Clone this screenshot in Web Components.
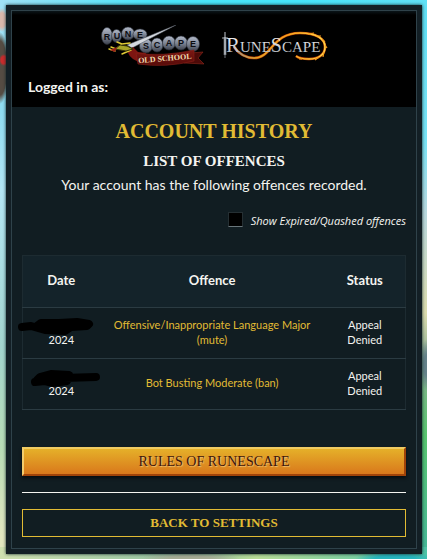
<!DOCTYPE html>
<html lang="en">
<head>
<meta charset="utf-8">
<meta name="viewport" content="width=device-width, initial-scale=1">
<title>Account History</title>
<style>
  html, body { margin: 0; }
  body {
    font-family: Lato, "Liberation Sans", sans-serif;
    color: #f4f4f0;
    --gold: #e1bb34;
    --line: #2b3b42;
    --panel: #111d22;
    --display: "Liberation Serif", serif;
  }
</style>
</head>
<body>
<page-backdrop>
  <stone-panel>
    <site-header slot="header"></site-header>
    <page-heading>
      Account History
      <span slot="sub">List of Offences</span>
      <span slot="intro">Your account has the following offences recorded.</span>
    </page-heading>
    <expired-toggle>Show Expired/Quashed offences</expired-toggle>
    <offence-table></offence-table>
    <gold-button>Rules of RuneScape</gold-button>
    <outline-link href="#settings">Back to Settings</outline-link>
  </stone-panel>
</page-backdrop>

<script>
const html = String.raw;

class PageBackdrop extends HTMLElement {
  constructor() {
    super();
    this.attachShadow({ mode: 'open' });
    this.shadowRoot.innerHTML = html`
      <style>
        :host {
          display: block;
          box-sizing: border-box;
          min-height: 100vh;
          padding: 5px 5px 5px 6px;
          /* red tents on the left, hills on the right, sky to meadow behind */
          background:
            radial-gradient(ellipse 5px 6px at 4px 60px, #c92c2c 60%, transparent) no-repeat,
            radial-gradient(ellipse 6px 12px at 2px 20px, #d9b7ab 60%, transparent) no-repeat,
            radial-gradient(ellipse 9px 36px at 0 68px, #554c43 75%, transparent) no-repeat,
            radial-gradient(ellipse 8px 26px at 100% 365px, #65828a 40%, transparent) no-repeat,
            radial-gradient(ellipse 50px 8px at 190px 100%, #a6ab94 40%, transparent) no-repeat,
            radial-gradient(ellipse 40px 8px at 395px 100%, #27b4bd 50%, transparent) no-repeat,
            linear-gradient(90deg, #a0e1f6, #4be5fa 35%, #46e5fb 70%, #62e0f5) 0 0 / 100% 40px no-repeat,
            linear-gradient(90deg, #cfe0b0, #8fc0a0 45%, #b9dc97 60%, #4fc4a6) 0 100% / 100% 12px no-repeat,
            linear-gradient(#62e0f5, #79e4f6 25%, #b9d8de 38%, #dcdcae 56%, #8fb094 64%, #58c56e 78%, #45b79b) 100% 0 / 50% 100% no-repeat,
            linear-gradient(#8ddff5, #8fdcf1 20%, #b4e6f5 34%, #a3d5cf 62%, #b8dcb6 80%, #e2e6bf 96%);
        }
      </style>
      <slot></slot>
    `;
  }
}

class StonePanel extends HTMLElement {
  constructor() {
    super();
    this.attachShadow({ mode: 'open' });
    this.shadowRoot.innerHTML = html`
      <style>
        :host {
          display: block;
          padding: 6px;
          background: #131f25;
          box-shadow: 0 0 3px #0c2226;
        }
        .frame {
          outline: 1px solid #2f424a;
          background: var(--panel);
        }
        main { padding: 0 10px 11px; }
      </style>
      <div class="frame">
        <slot name="header"></slot>
        <main><slot></slot></main>
      </div>
    `;
  }
}

class SiteHeader extends HTMLElement {
  constructor() {
    super();
    this.attachShadow({ mode: 'open' });
    this.shadowRoot.innerHTML = html`
      <style>
        :host {
          display: block;
          background: linear-gradient(#0a1418, #000 4px);
          padding: 14px 16px 10px;
        }
        nav { display: flex; justify-content: center; gap: 16px; }
        a { display: block; height: 44px; }
        svg { display: block; }
        p { margin: 8px 0 0; font-size: 14px; line-height: 20px; font-weight: 700; }
      </style>
      <nav>
        <a href="#oldschool" aria-label="Old School RuneScape">
          <svg width="104" height="44" viewBox="0 0 104 44">
            <defs>
              <linearGradient id="stone" x1="0" y1="0" x2="0" y2="1">
                <stop offset="0" stop-color="#b3bac9"/>
                <stop offset=".55" stop-color="#78808f"/>
                <stop offset="1" stop-color="#3c414d"/>
              </linearGradient>
              <linearGradient id="ribbon" x1="0" y1="0" x2="0" y2="1">
                <stop offset="0" stop-color="#7d1813"/>
                <stop offset="1" stop-color="#560b09"/>
              </linearGradient>
            </defs>
            <g fill="url(#stone)" stroke="#2c303a" stroke-width=".6">
              <ellipse cx="7" cy="11" rx="5.500" ry="8.500"/>
              <ellipse cx="16.500" cy="11" rx="5" ry="6.500"/>
              <ellipse cx="28" cy="8.500" rx="6.500" ry="6.500"/>
              <ellipse cx="40" cy="9.500" rx="7" ry="5.500"/>
              <ellipse cx="46" cy="21" rx="6.500" ry="7"/>
              <ellipse cx="57" cy="20" rx="6" ry="7"/>
              <ellipse cx="69" cy="18" rx="6.500" ry="7"/>
              <ellipse cx="81" cy="18" rx="6.500" ry="7"/>
              <ellipse cx="93" cy="19" rx="6.500" ry="7.500"/>
            </g>
            <g font-family="Liberation Sans, sans-serif" font-weight="700" font-size="9" fill="#0c0d12" text-anchor="middle">
              <text x="7" y="15">R</text><text x="17" y="14">U</text><text x="28" y="12">N</text><text x="40" y="13">E</text>
              <text x="46" y="24">S</text><text x="57" y="23">C</text><text x="69" y="21">A</text><text x="81" y="21">P</text><text x="93" y="22">E</text>
            </g>
            <path d="M27 20 76 0 32 23z" fill="#d5d9df" stroke="#555b65" stroke-width=".5"/>
            <path d="M27 26Q31 36 43 38L46 28 38 27 33 22z" fill="#7d1511"/>
            <path d="M90 28 103 27 98 33 104 39 84 38z" fill="#4d0a08" stroke="#8f2a1d" stroke-width=".6"/>
            <path d="M36 28Q62 32 94 25L94 36Q65 43 38 39z" fill="url(#ribbon)" stroke="#8c2017" stroke-width=".6"/>
            <path d="M11 22 16 24 22 19 17 17M15 26 9 24M22 19 30 18M19 24 28 22M22 29 31 25" fill="none" stroke="#e0cb35" stroke-width="1.500" stroke-linecap="round"/>
            <path d="M15 24 20 20 27 21 33 24 26 26z" fill="#a7a428" stroke="#343207" stroke-width="1"/>
            <path d="M10 25 17 22 15 27z" fill="#9a2118"/>
            <text x="65" y="36" font-family="Liberation Serif, serif" font-weight="700" font-size="8" fill="#f0deb0" text-anchor="middle" transform="rotate(-5 65 35)">OLD SCHOOL</text>
          </svg>
        </a>
        <a href="#runescape" aria-label="RuneScape">
          <svg width="108" height="44" viewBox="0 0 108 44">
            <defs>
              <linearGradient id="steel" x1="0" y1="0" x2="0" y2="1">
                <stop offset="0" stop-color="#fff"/>
                <stop offset="1" stop-color="#a4a9b0"/>
              </linearGradient>
              <linearGradient id="fire" x1="0" y1="0" x2="1" y2="0">
                <stop offset="0" stop-color="#8f959d"/>
                <stop offset=".25" stop-color="#e0a628"/>
                <stop offset=".6" stop-color="#f7a61d"/>
                <stop offset="1" stop-color="#ffd94a"/>
              </linearGradient>
            </defs>
            <path d="M5 12V30" stroke="#a3a8ae" stroke-width="2.500"/>
            <path d="M5 7V13M2 13H8" stroke="#a3a8ae" stroke-width="1.200"/>
            <path d="M5 29V33" stroke="#70767e" stroke-width="1"/>
            <path d="M14 22Q22 33 34 33C52 33 52 8 80 8C97 8 105 14 105 22C105 30 98 34 89 34Q80 34 76 31" fill="none" stroke="#cc4b07" stroke-width="2.600"/>
            <path d="M14 22Q22 33 34 33C52 33 52 8 80 8C97 8 105 14 105 22C105 30 98 34 89 34Q80 34 76 31" fill="none" stroke="url(#fire)" stroke-width="1.500"/>
            <path d="M88 9 94 8M96 11 101 11M102 14 105 17M105 20 107 23M104 27 103 32M99 32 95 35M82 34 79 34" fill="none" stroke="#f49a1c" stroke-width="1.200"/>
            <text x="6" y="27" font-family="Liberation Serif, serif" font-size="15" fill="url(#steel)"><tspan font-size="21">R</tspan>UNE<tspan font-size="20">S</tspan>CAPE</text>
          </svg>
        </a>
      </nav>
      <p>Logged in as:</p>
    `;
  }
}

class PageHeading extends HTMLElement {
  constructor() {
    super();
    this.attachShadow({ mode: 'open' });
    this.shadowRoot.innerHTML = html`
      <style>
        :host { display: block; padding-top: 12px; text-align: center; }
        h1, h2 { margin: 0; font-family: var(--display); font-weight: 700; text-transform: uppercase; }
        h1 { font-size: 20px; line-height: 24px; color: var(--gold); }
        h2 { margin-top: 8px; font-size: 15px; line-height: 20px; }
        p { margin: 4px 0 0; font-size: 14px; line-height: 20px; }
      </style>
      <h1><slot></slot></h1>
      <h2><slot name="sub"></slot></h2>
      <p><slot name="intro"></slot></p>
    `;
  }
}

class ExpiredToggle extends HTMLElement {
  constructor() {
    super();
    this.attachShadow({ mode: 'open' });
    this.shadowRoot.innerHTML = html`
      <style>
        :host {
          display: flex;
          justify-content: flex-end;
          align-items: center;
          gap: 8px;
          padding-top: 16px;
          font-family: "Open Sans", sans-serif;
          font-size: 11px;
          line-height: 20px;
          font-style: italic;
        }
        input {
          appearance: none;
          box-sizing: border-box;
          width: 15px;
          height: 15px;
          margin: 0 0 4px;
          background: #000;
          border: 1px solid #252f33;
          border-bottom-color: #69757a;
        }
        input:checked { background: var(--gold); }
      </style>
      <input type="checkbox" id="expired">
      <label for="expired"><slot></slot></label>
    `;
  }
}

class InkMark extends HTMLElement {
  constructor() {
    super();
    this.attachShadow({ mode: 'open' });
    const shape = this.getAttribute('shape') === 'b'
      ? 'M6 14 16 13 24 15 38 13 40 7 22 6 11 9 8 12M12 10 34 10M34 10 67 9'
      : 'M5 10 14 9 28 13 48 14 54 10 70 9 72 7 60 5 42 6 24 6 20 9 60 8';
    this.shadowRoot.innerHTML = html`
      <style>
        :host { display: block; position: relative; height: 15px; }
        svg { position: absolute; left: 50%; top: 0; }
        :host([shape="a"]) svg { margin-left: -44px; }
        :host([shape="b"]) svg { margin-left: -32px; }
      </style>
      <svg width="77" height="19" viewBox="0 0 77 19" aria-hidden="true">
        <path d="${shape}" fill="#000" stroke="#000" stroke-width="8" stroke-linecap="round" stroke-linejoin="round"/>
      </svg>
    `;
  }
}

class OffenceTable extends HTMLElement {
  constructor() {
    super();
    this.attachShadow({ mode: 'open' });
    this.shadowRoot.innerHTML = html`
      <style>
        :host { display: block; padding-top: 24px; }
        table {
          width: 100%;
          table-layout: fixed;
          border-collapse: collapse;
          border: 1px solid #1d2b31;
          text-align: center;
          font-size: 11px;
          line-height: 15px;
        }
        .date { width: 20%; }
        .status { width: 21%; }
        th { height: 49px; padding: 0 0 2px; background: #14232a; font-size: 13px; font-weight: 700; }
        td { height: 47px; padding: 0 12px 3px; }
        td:first-child { padding: 0 0 3px; }
        tr { border-bottom: 1px solid var(--line); }
        a { color: var(--gold); text-decoration: none; }
      </style>
      <table>
        <thead>
          <tr><th class="date">Date</th><th>Offence</th><th class="status">Status</th></tr>
        </thead>
        <tbody>
          <tr>
            <td><ink-mark shape="a"></ink-mark>2024</td>
            <td><a href="#mute">Offensive/Inappropriate Language Major (mute)</a></td>
            <td>Appeal Denied</td>
          </tr>
          <tr>
            <td><ink-mark shape="b"></ink-mark>2024</td>
            <td><a href="#ban">Bot Busting Moderate (ban)</a></td>
            <td>Appeal Denied</td>
          </tr>
        </tbody>
      </table>
    `;
  }
}

class GoldButton extends HTMLElement {
  constructor() {
    super();
    this.attachShadow({ mode: 'open' });
    this.shadowRoot.innerHTML = html`
      <style>
        :host { display: block; padding: 37px 0 16px; border-bottom: 1px solid #f4f4f0; }
        button {
          display: block;
          box-sizing: border-box;
          width: 100%;
          height: 29px;
          padding: 0;
          border: 2px solid;
          border-color: #f0cb62 #a04309 #a04309 #f3cc6c;
          background: linear-gradient(#e5b029, #d9781c);
          box-shadow: 0 2px 3px #070d10;
          color: #3d160c;
          font: 14px/24px var(--display);
          text-transform: uppercase;
          text-shadow: 1px 1px 1px #f0c173;
          cursor: pointer;
        }
      </style>
      <button type="button"><slot></slot></button>
    `;
  }
}

class OutlineLink extends HTMLElement {
  constructor() {
    super();
    this.attachShadow({ mode: 'open' });
    this.shadowRoot.innerHTML = html`
      <style>
        :host { display: block; padding-top: 16px; }
        a {
          display: block;
          border: 1px solid var(--gold);
          color: var(--gold);
          font: 700 13px/26px var(--display);
          text-align: center;
          text-decoration: none;
          text-transform: uppercase;
        }
      </style>
      <a href="${this.getAttribute('href') || '#'}"><slot></slot></a>
    `;
  }
}

customElements.define('page-backdrop', PageBackdrop);
customElements.define('stone-panel', StonePanel);
customElements.define('site-header', SiteHeader);
customElements.define('page-heading', PageHeading);
customElements.define('expired-toggle', ExpiredToggle);
customElements.define('ink-mark', InkMark);
customElements.define('offence-table', OffenceTable);
customElements.define('gold-button', GoldButton);
customElements.define('outline-link', OutlineLink);
</script>
</body>
</html>
